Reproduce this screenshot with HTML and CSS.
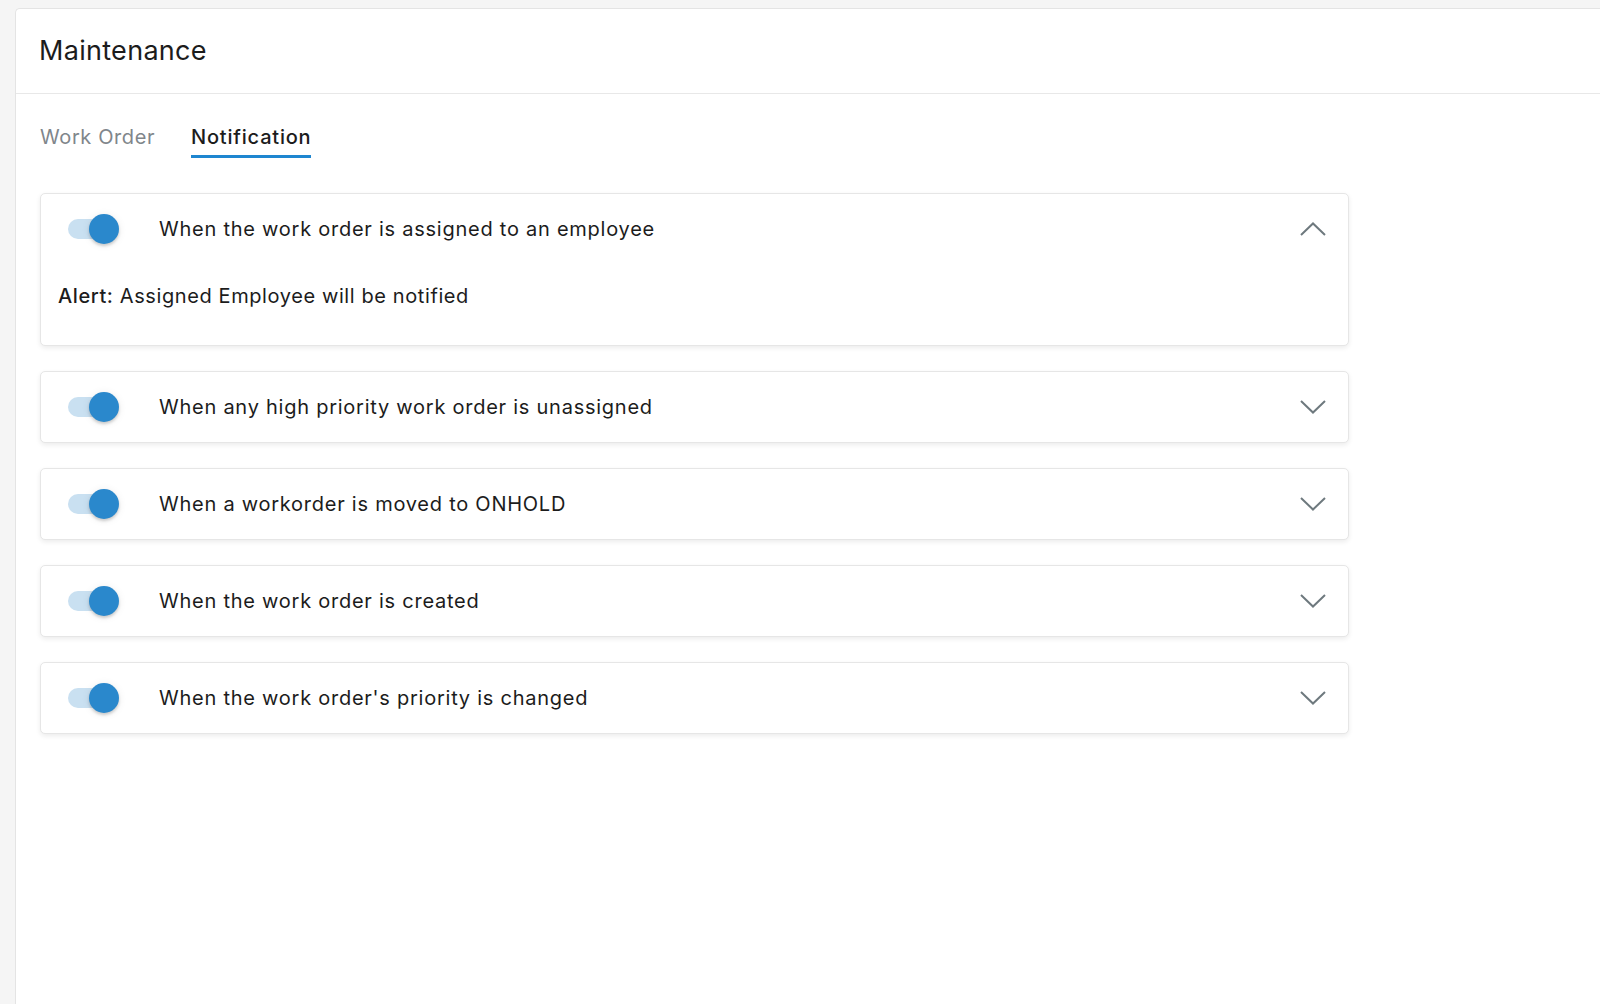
FILE: index.html
```html
<!DOCTYPE html>
<html lang="en">
<head>
    <meta charset="UTF-8">
    <meta name="viewport" content="width=device-width, initial-scale=1.0">
    <title>Maintenance - Notification Settings</title>
    <link rel="stylesheet" href="styles.css">
</head>
<body>
    <div class="panel">
        <div class="panel-header">
            <h1>Maintenance</h1>
        </div>
        <div class="panel-body">
            <div class="tabs">
                <div class="tab">Work Order</div>
                <div class="tab active">Notification</div>
            </div>

            <div class="rules">
                <div class="rule open">
                    <div class="rule-head">
                        <span class="switch on"><span class="track"></span><span class="thumb"></span></span>
                        <span class="rule-title">When the work order is assigned to an employee</span>
                        <svg class="chevron" width="26" height="14" viewBox="0 0 26 14"><polyline points="1,13 13,1.5 25,13" /></svg>
                    </div>
                    <div class="rule-detail">
                        <b>Alert:</b> Assigned Employee will be notified
                    </div>
                </div>

                <div class="rule">
                    <div class="rule-head">
                        <span class="switch on"><span class="track"></span><span class="thumb"></span></span>
                        <span class="rule-title">When any high priority work order is unassigned</span>
                        <svg class="chevron" width="26" height="14" viewBox="0 0 26 14"><polyline points="1,1 13,12.5 25,1" /></svg>
                    </div>
                </div>

                <div class="rule">
                    <div class="rule-head">
                        <span class="switch on"><span class="track"></span><span class="thumb"></span></span>
                        <span class="rule-title">When a workorder is moved to ONHOLD</span>
                        <svg class="chevron" width="26" height="14" viewBox="0 0 26 14"><polyline points="1,1 13,12.5 25,1" /></svg>
                    </div>
                </div>

                <div class="rule">
                    <div class="rule-head">
                        <span class="switch on"><span class="track"></span><span class="thumb"></span></span>
                        <span class="rule-title">When the work order is created</span>
                        <svg class="chevron" width="26" height="14" viewBox="0 0 26 14"><polyline points="1,1 13,12.5 25,1" /></svg>
                    </div>
                </div>

                <div class="rule">
                    <div class="rule-head">
                        <span class="switch on"><span class="track"></span><span class="thumb"></span></span>
                        <span class="rule-title">When the work order's priority is changed</span>
                        <svg class="chevron" width="26" height="14" viewBox="0 0 26 14"><polyline points="1,1 13,12.5 25,1" /></svg>
                    </div>
                </div>
            </div>
        </div>
    </div>
</body>
</html>
```

FILE: styles.css
```css
* {
    box-sizing: border-box;
}
body {
    font-family: Inter, "Noto Sans", Arial, sans-serif;
    background-color: #f5f5f5;
    color: #1c1c1c;
    margin: 0;
    padding: 8px 0 0 15px;
    height: 100vh;
    overflow: hidden;
}
.panel {
    background-color: white;
    border: 1px solid #e4e4e4;
    border-right: none;
    border-bottom: none;
    border-radius: 5px 0 0 0;
    height: 100%;
}
.panel-header {
    height: 85px;
    display: flex;
    align-items: center;
    padding: 0 24px 1px 23px;
    border-bottom: 1px solid #e8e8e8;
}
.panel-header h1 {
    margin: 0;
    font-size: 27px;
    font-weight: 400;
    letter-spacing: 0.3px;
}
.panel-body {
    padding: 31px 24px 0;
}
.tabs {
    display: flex;
    gap: 36px;
}
.tab {
    font-size: 20px;
    line-height: 24px;
    color: #80868b;
    padding-bottom: 6px;
    border-bottom: 3px solid transparent;
    letter-spacing: 0.6px;
}
.tab.active {
    color: #1c1c1c;
    font-weight: 500;
    letter-spacing: 0.8px;
    border-bottom-color: #1e86d0;
}
.rules {
    margin-top: 35px;
    width: 1309px;
    display: flex;
    flex-direction: column;
    gap: 25px;
}
.rule {
    border: 1px solid #e6e6e6;
    border-radius: 5px;
    box-shadow: 0 2px 5px rgba(0,0,0,0.08);
    background-color: white;
}
.rule-head {
    height: 70px;
    display: flex;
    align-items: center;
    padding: 0 22px 0 27px;
}
.rule-title {
    margin-left: 40px;
    font-size: 20px;
    letter-spacing: 0.75px;
}
.chevron {
    margin-left: auto;
    fill: none;
    stroke: #6e797e;
    stroke-width: 2;
}
.switch {
    position: relative;
    width: 51px;
    height: 30px;
    flex-shrink: 0;
}
.switch .track {
    position: absolute;
    left: 0;
    top: 5px;
    width: 48px;
    height: 20px;
    border-radius: 10px;
    background-color: #c9e0f1;
}
.switch .thumb {
    position: absolute;
    left: 21px;
    top: 0;
    width: 30px;
    height: 30px;
    border-radius: 50%;
    background-color: #2a88cc;
    box-shadow: 0 2px 3px rgba(0,0,0,0.18), 0 1px 8px rgba(0,0,0,0.08);
}
.rule-detail {
    margin-top: 17px;
    padding: 0 17px 34px;
    font-size: 20px;
    line-height: 30px;
    letter-spacing: 0.6px;
}
.rule-detail b {
    font-weight: 500;
}
```
